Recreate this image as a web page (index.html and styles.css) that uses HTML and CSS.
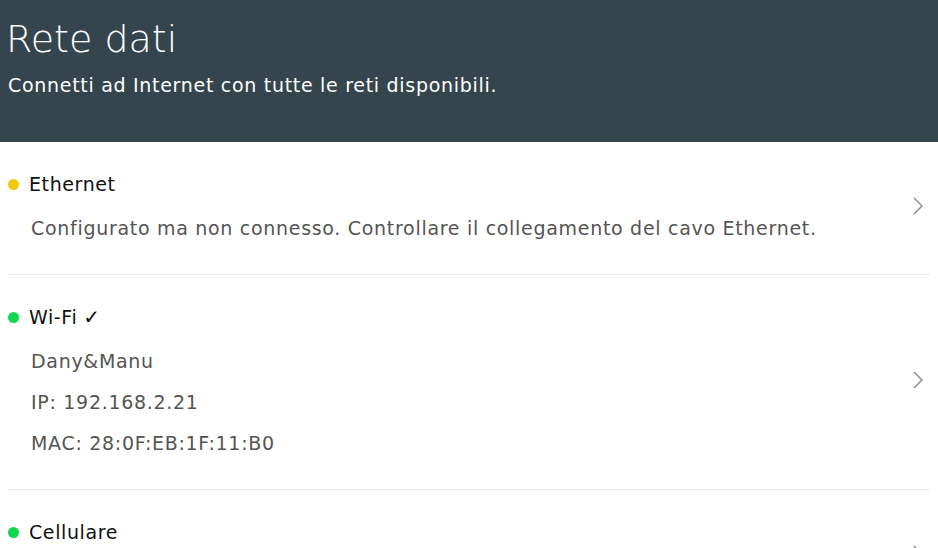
FILE: index.html
```html
<!DOCTYPE html>
<html lang="it">
<head>
<meta charset="utf-8">
<link rel="stylesheet" href="styles.css">
</head>
<body>
<header class="hero">
  <h1 class="hero-title">Rete dati</h1>
  <p class="hero-sub">Connetti ad Internet con tutte le reti disponibili.</p>
</header>
<main class="list">
  <section class="item">
    <div class="item-body">
      <div class="item-title"><span class="dot dot-yellow"></span>Ethernet</div>
      <div class="item-lines">
        <div class="line">Configurato ma non connesso. Controllare il collegamento del cavo Ethernet.</div>
      </div>
    </div>
    <svg class="chev" viewBox="0 0 10 18" width="10" height="18"><path d="M1 1 L9 9 L1 17" fill="none" stroke="#8a8a8a" stroke-width="1.5"/></svg>
  </section>
  <section class="item">
    <div class="item-body">
      <div class="item-title"><span class="dot dot-green"></span>Wi-Fi <span class="check">✓</span></div>
      <div class="item-lines">
        <div class="line">Dany&amp;Manu</div>
        <div class="line">IP: 192.168.2.21</div>
        <div class="line">MAC: 28:0F:EB:1F:11:B0</div>
      </div>
    </div>
    <svg class="chev" viewBox="0 0 10 18" width="10" height="18"><path d="M1 1 L9 9 L1 17" fill="none" stroke="#8a8a8a" stroke-width="1.5"/></svg>
  </section>
  <section class="item">
    <div class="item-body item-body-tall">
      <div class="item-title"><span class="dot dot-green"></span>Cellulare</div>
    </div>
    <svg class="chev" viewBox="0 0 10 18" width="10" height="18"><path d="M1 1 L9 9 L1 17" fill="none" stroke="#8a8a8a" stroke-width="1.5"/></svg>
  </section>
</main>
</body>
</html>
```
FILE: styles.css
```css
html, body {
  margin: 0;
  padding: 0;
  background: #ffffff;
  font-family: "DejaVu Sans", "Open Sans", sans-serif;
  overflow: hidden;
}
.hero {
  background: #35454d;
  color: #ffffff;
  height: 142px;
  box-sizing: border-box;
  padding: 16px 8px 0;
}
.hero-title {
  margin: 0 0 0 -2px;
  font-size: 38px;
  font-weight: 200;
  line-height: 46px;
}
.hero-sub {
  margin: 11px 0 0;
  font-size: 19px;
  letter-spacing: 0.7px;
  line-height: 24px;
  font-weight: 400;
}
.list {
  padding: 0 8px;
}
.item {
  display: flex;
  align-items: center;
  border-bottom: 1px solid #e9e9e9;
  padding: 30px 7px 34px 0;
}
.item-body {
  flex: 1;
}
.item-body-tall {
  min-height: 68px;
}
.item-title {
  display: flex;
  align-items: center;
  font-size: 19px;
  letter-spacing: 0.6px;
  line-height: 24px;
  color: #111111;
}
.check {
  margin-left: 6px;
  font-family: "Liberation Sans", "DejaVu Sans", sans-serif;
  font-size: 20px;
}
.dot {
  width: 11px;
  height: 11px;
  border-radius: 50%;
  margin-right: 10px;
  flex: none;
}
.dot-yellow { background: #f2c80f; }
.dot-green { background: #10d84e; }
.item-lines {
  display: flex;
  flex-direction: column;
  gap: 17px;
  margin-top: 20px;
  padding-left: 23px;
}
.line {
  font-size: 19px;
  letter-spacing: 0.7px;
  line-height: 24px;
  color: #555555;
}
.chev {
  flex: none;
}
```
